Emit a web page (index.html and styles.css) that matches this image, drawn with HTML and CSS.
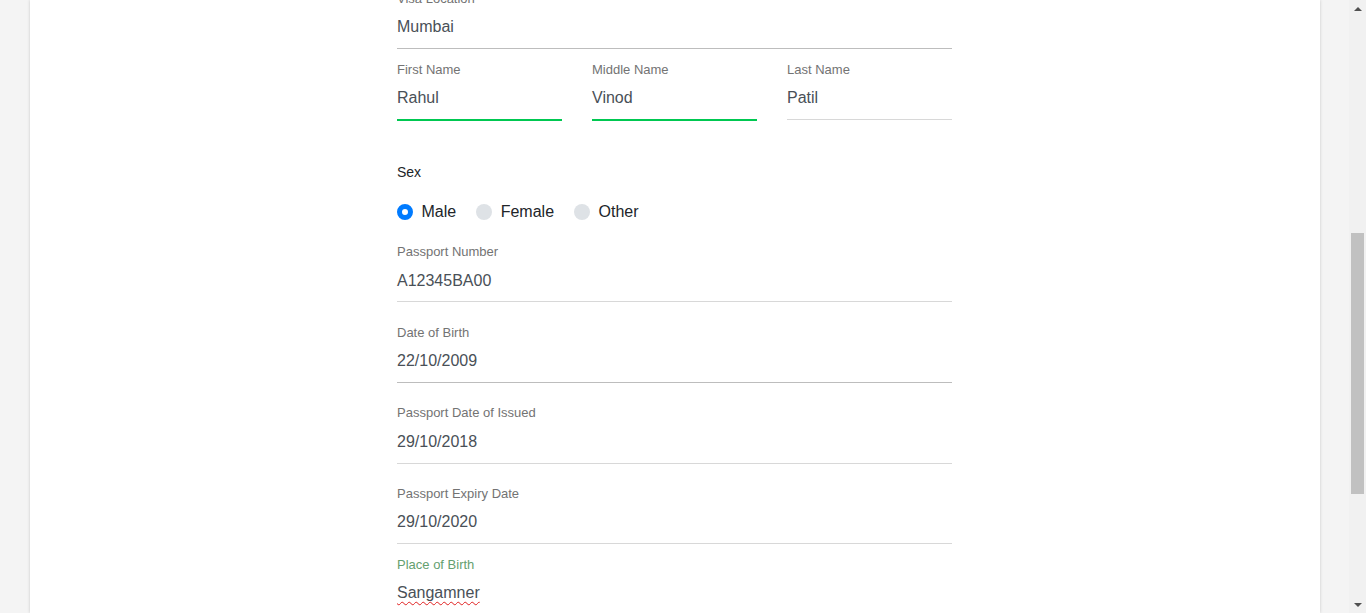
FILE: index.html
```html
<!DOCTYPE html>
<html lang="en">
<head>
<meta charset="utf-8">
<title>Visa Application</title>
<link rel="stylesheet" href="styles.css">
</head>
<body>
<div class="viewport">
  <div class="page">
    <div class="card">
      <form class="form">
        <div class="field">
          <label class="field-label">Visa Location</label>
          <div class="field-value field-value--dark">Mumbai</div>
        </div>

        <div class="name-row">
          <div class="field">
            <label class="field-label">First Name</label>
            <div class="field-value field-value--valid">Rahul</div>
          </div>
          <div class="field">
            <label class="field-label">Middle Name</label>
            <div class="field-value field-value--valid">Vinod</div>
          </div>
          <div class="field">
            <label class="field-label">Last Name</label>
            <div class="field-value">Patil</div>
          </div>
        </div>

        <div class="sex-label">Sex</div>
        <div class="radio-row">
          <span class="radio"><span class="radio-dot radio-dot--checked"></span>Male</span>
          <span class="radio"><span class="radio-dot"></span>Female</span>
          <span class="radio"><span class="radio-dot"></span>Other</span>
        </div>

        <div class="field field--first">
          <label class="field-label">Passport Number</label>
          <div class="field-value field-value--low">A12345BA00</div>
        </div>
        <div class="field field--spaced">
          <label class="field-label">Date of Birth</label>
          <div class="field-value field-value--dark">22/10/2009</div>
        </div>
        <div class="field field--spaced">
          <label class="field-label field-label--high">Passport Date of Issued</label>
          <div class="field-value">29/10/2018</div>
        </div>
        <div class="field field--near">
          <label class="field-label">Passport Expiry Date</label>
          <div class="field-value">29/10/2020</div>
        </div>
        <div class="field field--tight">
          <label class="field-label field-label--focus">Place of Birth</label>
          <div class="field-value field-value--focus"><span class="misspelled">Sangamner</span></div>
        </div>
      </form>
    </div>
  </div>
  <div class="scrollbar">
    <div class="scroll-btn"><span class="arrow-up"></span></div>
    <div class="scroll-track"><div class="scroll-thumb"></div></div>
    <div class="scroll-btn"><span class="arrow-down"></span></div>
  </div>
</div>
</body>
</html>
```

FILE: styles.css
```css
html, body {
  margin: 0;
  padding: 0;
  height: 613px;
  overflow: hidden;
}

body {
  font-family: "Liberation Sans", Arial, sans-serif;
}

.viewport {
  display: flex;
  height: 613px;
}

.page {
  flex: 1;
  background: #f4f4f4;
  padding: 0 29px 0 30px;
}

.card {
  background: #fff;
  height: 100%;
  box-shadow: 0 0 3px rgba(0, 0, 0, 0.18);
  overflow: hidden;
}

.form {
  width: 555px;
  margin: -12px 0 0 367px;
}

.field-label {
  display: block;
  padding-top: 1px;
  font-size: 13px;
  line-height: 20px;
  color: #737373;
}

.field-label--high {
  padding-top: 0;
  padding-bottom: 1px;
}

.field-label--focus {
  color: #64a06f;
}

.field-value {
  margin-top: 6px;
  font-size: 16px;
  line-height: 24px;
  color: #495057;
  padding-bottom: 9px;
  border-bottom: 1px solid #d8d8d8;
}

.field-value--low {
  padding-top: 1px;
  padding-bottom: 8px;
}

.field-value--dark {
  border-bottom-color: #bdbdbd;
}

.field-value--valid {
  border-bottom: 2px solid #00c851;
}

.field-value--focus {
  border-bottom: none;
}

.misspelled {
  text-decoration: underline wavy #e02020;
  text-decoration-thickness: 1px;
  text-underline-offset: 3px;
}

.name-row {
  display: grid;
  grid-template-columns: repeat(3, 1fr);
  column-gap: 30px;
  align-items: start;
  margin-top: 10px;
}

.sex-label {
  margin-top: 41px;
  font-size: 14px;
  line-height: 20px;
  color: #212529;
}

.radio-row {
  margin-top: 18px;
  display: flex;
  gap: 20px;
  font-size: 16px;
  line-height: 24px;
  color: #212529;
}

.radio {
  display: inline-flex;
  align-items: center;
  gap: 8.5px;
}

.radio-dot {
  width: 16px;
  height: 16px;
  border-radius: 50%;
  background: #dee2e6;
  box-sizing: border-box;
}

.radio-dot--checked {
  background: #fff;
  border: 5px solid #007bff;
}

.field--first {
  margin-top: 17px;
}

.field--spaced {
  margin-top: 20px;
}

.field--near {
  margin-top: 19px;
}

.field--tight {
  margin-top: 10px;
}

.scrollbar {
  width: 17px;
  background: #f1f1f1;
  display: flex;
  flex-direction: column;
}

.scroll-btn {
  height: 17px;
  display: flex;
  align-items: center;
  justify-content: center;
}

.arrow-up {
  width: 0;
  height: 0;
  border-left: 4px solid transparent;
  border-right: 4px solid transparent;
  border-bottom: 4px solid #505050;
}

.arrow-down {
  width: 0;
  height: 0;
  border-left: 4px solid transparent;
  border-right: 4px solid transparent;
  border-top: 4px solid #505050;
}

.scroll-track {
  flex: 1;
  padding: 0 2px;
}

.scroll-thumb {
  margin-top: 216px;
  height: 261px;
  background: #c1c1c1;
}
```
